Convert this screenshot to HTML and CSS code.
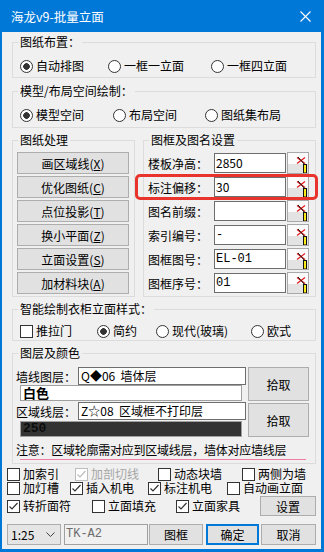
FILE: index.html
```html
<!DOCTYPE html>
<html lang="zh-CN">
<head>
    <meta charset="UTF-8">
    <meta name="viewport" content="width=device-width, initial-scale=1.0">
    <title>海龙v9-批量立面</title>
    <link rel="stylesheet" href="styles.css">
</head>
<body>
<div class="window">
    <div class="titlebar">
        <span>海龙v9-批量立面</span>
        <svg class="close" width="11" height="11" viewBox="0 0 11 11"><path d="M0.5 0.5l10 10M10.5 0.5l-10 10" stroke="#fff" stroke-width="1.1"/></svg>
    </div>
    <div class="body">
        <fieldset class="group g-layout">
            <legend>图纸布置：</legend>
            <div class="opts">
                <label class="opt"><span class="rb on"></span>自动排图</label>
                <label class="opt"><span class="rb"></span>一框一立面</label>
                <label class="opt"><span class="rb"></span>一框四立面</label>
            </div>
        </fieldset>

        <fieldset class="group g-space">
            <legend>模型/布局空间绘制：</legend>
            <div class="opts">
                <label class="opt"><span class="rb on"></span>模型空间</label>
                <label class="opt"><span class="rb"></span>布局空间</label>
                <label class="opt"><span class="rb"></span>图纸集布局</label>
            </div>
        </fieldset>

        <div class="pair">
            <fieldset class="group g-tools">
                <legend>图纸处理</legend>
                <div class="btn-col">
                    <div class="btn">画区域线(<u>X</u>)</div>
                    <div class="btn">优化图纸(<u>C</u>)</div>
                    <div class="btn">点位投影(<u>T</u>)</div>
                    <div class="btn">换小平面(<u>Z</u>)</div>
                    <div class="btn">立面设置(<u>S</u>)</div>
                    <div class="btn">加材料块(<u>A</u>)</div>
                </div>
            </fieldset>
            <fieldset class="group g-frame">
                <legend>图框及图名设置</legend>
                <div class="fields">
                    <div class="field">
                        <span class="lbl">楼板净高：</span>
                        <span class="edit">2850</span>
                        <span class="pick"><svg width="20" height="20" viewBox="0 0 20 20"><path d="M9 4.5l8 6M17 4.5l-8 6" stroke="#e21010" stroke-width="1.1"/><path d="M10 4l7 8" stroke="#111" stroke-width="1"/><rect x="15.5" y="11.5" width="3" height="8.5" fill="#ffe81a" stroke="#111" stroke-width="1"/></svg></span>
                    </div>
                    <div class="field hl">
                        <span class="lbl">标注偏移：</span>
                        <span class="edit">30</span>
                        <span class="pick"><svg width="20" height="20" viewBox="0 0 20 20"><path d="M9 4.5l8 6M17 4.5l-8 6" stroke="#e21010" stroke-width="1.1"/><path d="M10 4l7 8" stroke="#111" stroke-width="1"/><rect x="15.5" y="11.5" width="3" height="8.5" fill="#ffe81a" stroke="#111" stroke-width="1"/></svg></span>
                    </div>
                    <div class="field">
                        <span class="lbl">图名前缀：</span>
                        <span class="edit"></span>
                        <span class="pick"><svg width="20" height="20" viewBox="0 0 20 20"><path d="M9 4.5l8 6M17 4.5l-8 6" stroke="#e21010" stroke-width="1.1"/><path d="M10 4l7 8" stroke="#111" stroke-width="1"/><rect x="15.5" y="11.5" width="3" height="8.5" fill="#ffe81a" stroke="#111" stroke-width="1"/></svg></span>
                    </div>
                    <div class="field">
                        <span class="lbl">索引编号：</span>
                        <span class="edit mono">-</span>
                        <span class="pick"><svg width="20" height="20" viewBox="0 0 20 20"><path d="M9 4.5l8 6M17 4.5l-8 6" stroke="#e21010" stroke-width="1.1"/><path d="M10 4l7 8" stroke="#111" stroke-width="1"/><rect x="15.5" y="11.5" width="3" height="8.5" fill="#ffe81a" stroke="#111" stroke-width="1"/></svg></span>
                    </div>
                    <div class="field">
                        <span class="lbl">图框图号：</span>
                        <span class="edit mono">EL-01</span>
                        <span class="pick"><svg width="20" height="20" viewBox="0 0 20 20"><path d="M9 4.5l8 6M17 4.5l-8 6" stroke="#e21010" stroke-width="1.1"/><path d="M10 4l7 8" stroke="#111" stroke-width="1"/><rect x="15.5" y="11.5" width="3" height="8.5" fill="#ffe81a" stroke="#111" stroke-width="1"/></svg></span>
                    </div>
                    <div class="field">
                        <span class="lbl">图框序号：</span>
                        <span class="edit mono">01</span>
                        <span class="pick"><svg width="20" height="20" viewBox="0 0 20 20"><path d="M9 4.5l8 6M17 4.5l-8 6" stroke="#e21010" stroke-width="1.1"/><path d="M10 4l7 8" stroke="#111" stroke-width="1"/><rect x="15.5" y="11.5" width="3" height="8.5" fill="#ffe81a" stroke="#111" stroke-width="1"/></svg></span>
                    </div>
                </div>
            </fieldset>
        </div>

        <fieldset class="group g-style">
            <legend>智能绘制衣柜立面样式：</legend>
            <div class="opts">
                <label class="opt"><span class="cb"></span>推拉门</label>
                <label class="opt"><span class="rb on"></span>简约</label>
                <label class="opt"><span class="rb"></span>现代(玻璃)</label>
                <label class="opt"><span class="rb"></span>欧式</label>
            </div>
        </fieldset>

        <fieldset class="group g-layers">
            <legend>图层及颜色</legend>
            <div class="layers">
                <div class="layer-col">
                    <div class="layer-row">
                        <span class="lbl">墙线图层：</span>
                        <span class="edit">Q◆06&nbsp; 墙体层</span>
                    </div>
                    <div class="swatch white">白色</div>
                    <div class="layer-row">
                        <span class="lbl">区域线层：</span>
                        <span class="edit">Z☆08&nbsp; 区域框不打印层</span>
                    </div>
                    <div class="swatch dark">250</div>
                </div>
                <div class="pick-col">
                    <div class="btn">拾取</div>
                    <div class="btn">拾取</div>
                </div>
            </div>
            <div class="note">注意：区域轮廓需对应到区域线层，墙体对应墙线层</div>
            <div class="note-line"></div>
        </fieldset>

        <div class="checks">
            <div class="crow r1">
                <label class="opt"><span class="cb"></span>加索引</label>
                <label class="opt off"><span class="cb"><svg width="11" height="11" viewBox="0 0 11 11"><path d="M1.5 5.5l2.5 2.5 5.5-6" fill="none" stroke="#bdbdbd" stroke-width="1.2"/></svg></span>加剖切线</label>
                <label class="opt"><span class="cb"></span>动态块墙</label>
                <label class="opt"><span class="cb"></span>两侧为墙</label>
            </div>
            <div class="crow r2">
                <label class="opt"><span class="cb"></span>加灯槽</label>
                <label class="opt"><span class="cb"><svg width="11" height="11" viewBox="0 0 11 11"><path d="M1.5 5.5l2.5 2.5 5.5-6" fill="none" stroke="#333" stroke-width="1.2"/></svg></span>插入机电</label>
                <label class="opt"><span class="cb"><svg width="11" height="11" viewBox="0 0 11 11"><path d="M1.5 5.5l2.5 2.5 5.5-6" fill="none" stroke="#333" stroke-width="1.2"/></svg></span>标注机电</label>
                <label class="opt"><span class="cb"></span>自动画立面</label>
            </div>
            <div class="crow r3">
                <label class="opt"><span class="cb"><svg width="11" height="11" viewBox="0 0 11 11"><path d="M1.5 5.5l2.5 2.5 5.5-6" fill="none" stroke="#333" stroke-width="1.2"/></svg></span>转折面符</label>
                <label class="opt"><span class="cb"></span>立面填充</label>
                <label class="opt"><span class="cb"><svg width="11" height="11" viewBox="0 0 11 11"><path d="M1.5 5.5l2.5 2.5 5.5-6" fill="none" stroke="#333" stroke-width="1.2"/></svg></span>立面家具</label>
                <div class="btn">设置</div>
            </div>
        </div>

        <div class="footer">
            <div class="combo">1:25<svg width="9" height="5" viewBox="0 0 9 5"><path d="M0.5 0.5l4 4 4-4" fill="none" stroke="#444" stroke-width="1"/></svg></div>
            <div class="edit-dis">TK-A2</div>
            <div class="btn b-frame">图框</div>
            <div class="btn b-ok">确定</div>
            <div class="btn b-cancel">取消</div>
        </div>
    </div>
</div>
</body>
</html>
```

FILE: styles.css
```css
* { box-sizing: border-box; }
body {
    margin: 0;
    font-family: "Noto Sans CJK SC", "Microsoft YaHei", sans-serif;
    font-size: 12px;
    color: #000;
    background: #fff;
}
.window {
    width: 324px;
    height: 552px;
    background: #f0f0f0;
    border: solid #0078d7;
    border-width: 0 3px 3px 2px;
    overflow: hidden;
}
.titlebar {
    height: 32px;
    background: #0078d7;
    color: #fff;
    display: flex;
    align-items: center;
    padding: 0 10px 0 9px;
    font-size: 12.5px;
}
.titlebar .close { margin-left: auto; }
.body { padding: 2px 5px 0 10px; }

/* group boxes */
.group {
    margin: 0;
    border: 1px solid #dcdcdc;
    padding: 0 6px 3px 4px;
    min-width: 0;
}
.group legend { padding: 0 2px; margin-left: 1px; line-height: 16px; }
.g-space { margin-top: 5px; padding-bottom: 4px; }
.pair { display: flex; gap: 8px; margin-top: 4px; }
.g-tools { width: 123px; padding: 0 5px 2px 4px; }
.g-frame { width: 173px; padding: 0 6px 2px 4px; }
.g-style { margin-top: 4px; padding-bottom: 1px; }
.g-layers { margin-top: 4px; padding-bottom: 3px; }

/* radios and checkboxes */
.opts { display: grid; padding: 8px 0 0 3px; height: 24px; align-items: center; }
.g-layout .opts { grid-template-columns: 88px 103px auto; }
.g-space .opts { grid-template-columns: 93px 92px auto; }
.g-style .opts { padding-top: 6px; height: 22px; grid-template-columns: 77px 59px 95px auto; }
.opt { display: flex; align-items: center; line-height: 16px; white-space: nowrap; }
.opt.off { color: #a6a6a6; }
.rb {
    width: 13px;
    height: 13px;
    border: 1px solid #333;
    border-radius: 50%;
    background: #fff;
    margin-right: 3px;
    flex-shrink: 0;
}
.rb.on { background: radial-gradient(circle, #333 0 3px, #fff 3.6px); }
.cb {
    width: 13px;
    height: 13px;
    border: 1px solid #333;
    background: #fff;
    margin-right: 3px;
    flex-shrink: 0;
    display: flex;
}
.opt.off .cb { border-color: #bdbdbd; }

/* buttons */
.btn {
    border: 1px solid #adadad;
    background: #e1e1e1;
    display: flex;
    align-items: center;
    justify-content: center;
    white-space: nowrap;
}
.btn-col { padding-top: 4px; display: flex; flex-direction: column; gap: 2px; }
.btn-col .btn { height: 22px; }

/* frame fields */
.fields { padding-top: 4px; display: flex; flex-direction: column; gap: 2px; }
.field { display: flex; align-items: center; height: 22px; }
.field .lbl { width: 66px; white-space: nowrap; }
.edit {
    height: 20px;
    border: 1px solid #6e6e6e;
    background: #fff;
    padding-left: 1px;
    line-height: 18px;
    white-space: nowrap;
    overflow: hidden;
}
.field .edit { width: 72px; }
.mono { font-family: "Liberation Mono", monospace; }
.pick {
    width: 22px;
    height: 22px;
    margin-left: 1px;
    border: 1px solid #a8a8a8;
    background: linear-gradient(#fbfbfb 55%, #e3e3e3 55%);
    display: flex;
}
.field.hl { position: relative; }
.field.hl::after {
    content: "";
    position: absolute;
    left: -13px;
    right: -9px;
    top: -2px;
    bottom: -2px;
    border: 3px solid #e8342c;
    border-radius: 5px;
}

/* layers */
.layers {
    display: grid;
    grid-template-columns: 230px 61px;
    column-gap: 2px;
    margin-left: -1px;
    padding-top: 6px;
}
.layer-row { display: flex; align-items: center; height: 18px; }
.layer-row .lbl { width: 62px; white-space: nowrap; }
.layer-row .edit { width: 168px; height: 18px; line-height: 16px; padding-left: 2px; }
.layer-row + .swatch + .layer-row { margin-top: 1px; }
.swatch {
    margin-left: 4px;
    width: 222px;
    height: 16px;
    border: 1px solid #a0a0a0;
    font-weight: bold;
    line-height: 14px;
    padding-left: 2px;
}
.swatch.white { background: #fff; font-size: 13px; }
.swatch.dark {
    margin-top: 1px;
    background: #333;
    color: #0c0c0c;
    font-family: "Liberation Mono", monospace;
    font-size: 13px;
}
.pick-col { display: flex; flex-direction: column; gap: 2px; }
.pick-col .btn { height: 34px; }
.note { margin: 5px 0 0 -1px; line-height: 15px; letter-spacing: -0.25px; white-space: nowrap; }
.note-line { height: 1px; background: #ee7fa0; margin: 2px 3px 0; }

/* bottom checks */
.checks { margin: 3px 0 0 -5px; }
.crow { display: grid; height: 14px; align-items: center; }
.crow .opt { line-height: 14px; height: 14px; }
.r1 { grid-template-columns: 68px 83px 84px auto; }
.r2 { grid-template-columns: 63px 78px 79px auto; }
.r3 { grid-template-columns: 85px 84px 84px 56px; height: 20px; margin-top: 1px; }
.r3 .btn { height: 20px; }

/* footer */
.footer { display: flex; height: 21px; margin: 8px 0 0 -5px; }
.combo {
    width: 54px;
    margin-right: 3px;
    border: 1px solid #adadad;
    background: #e5e5e5;
    display: flex;
    align-items: center;
    padding: 0 5px 0 3px;
}
.combo svg { margin-left: auto; }
.edit-dis {
    width: 84px;
    margin-right: 1px;
    border: 1px solid #a0a0a0;
    background: #f0f0f0;
    color: #6d6d6d;
    font-family: "Liberation Mono", monospace;
    padding-left: 1px;
    line-height: 18px;
}
.b-frame { width: 54px; margin-right: 3px; }
.b-ok { width: 53px; margin-right: 2px; border: 2px solid #0078d7; }
.b-cancel { width: 55px; }
```
